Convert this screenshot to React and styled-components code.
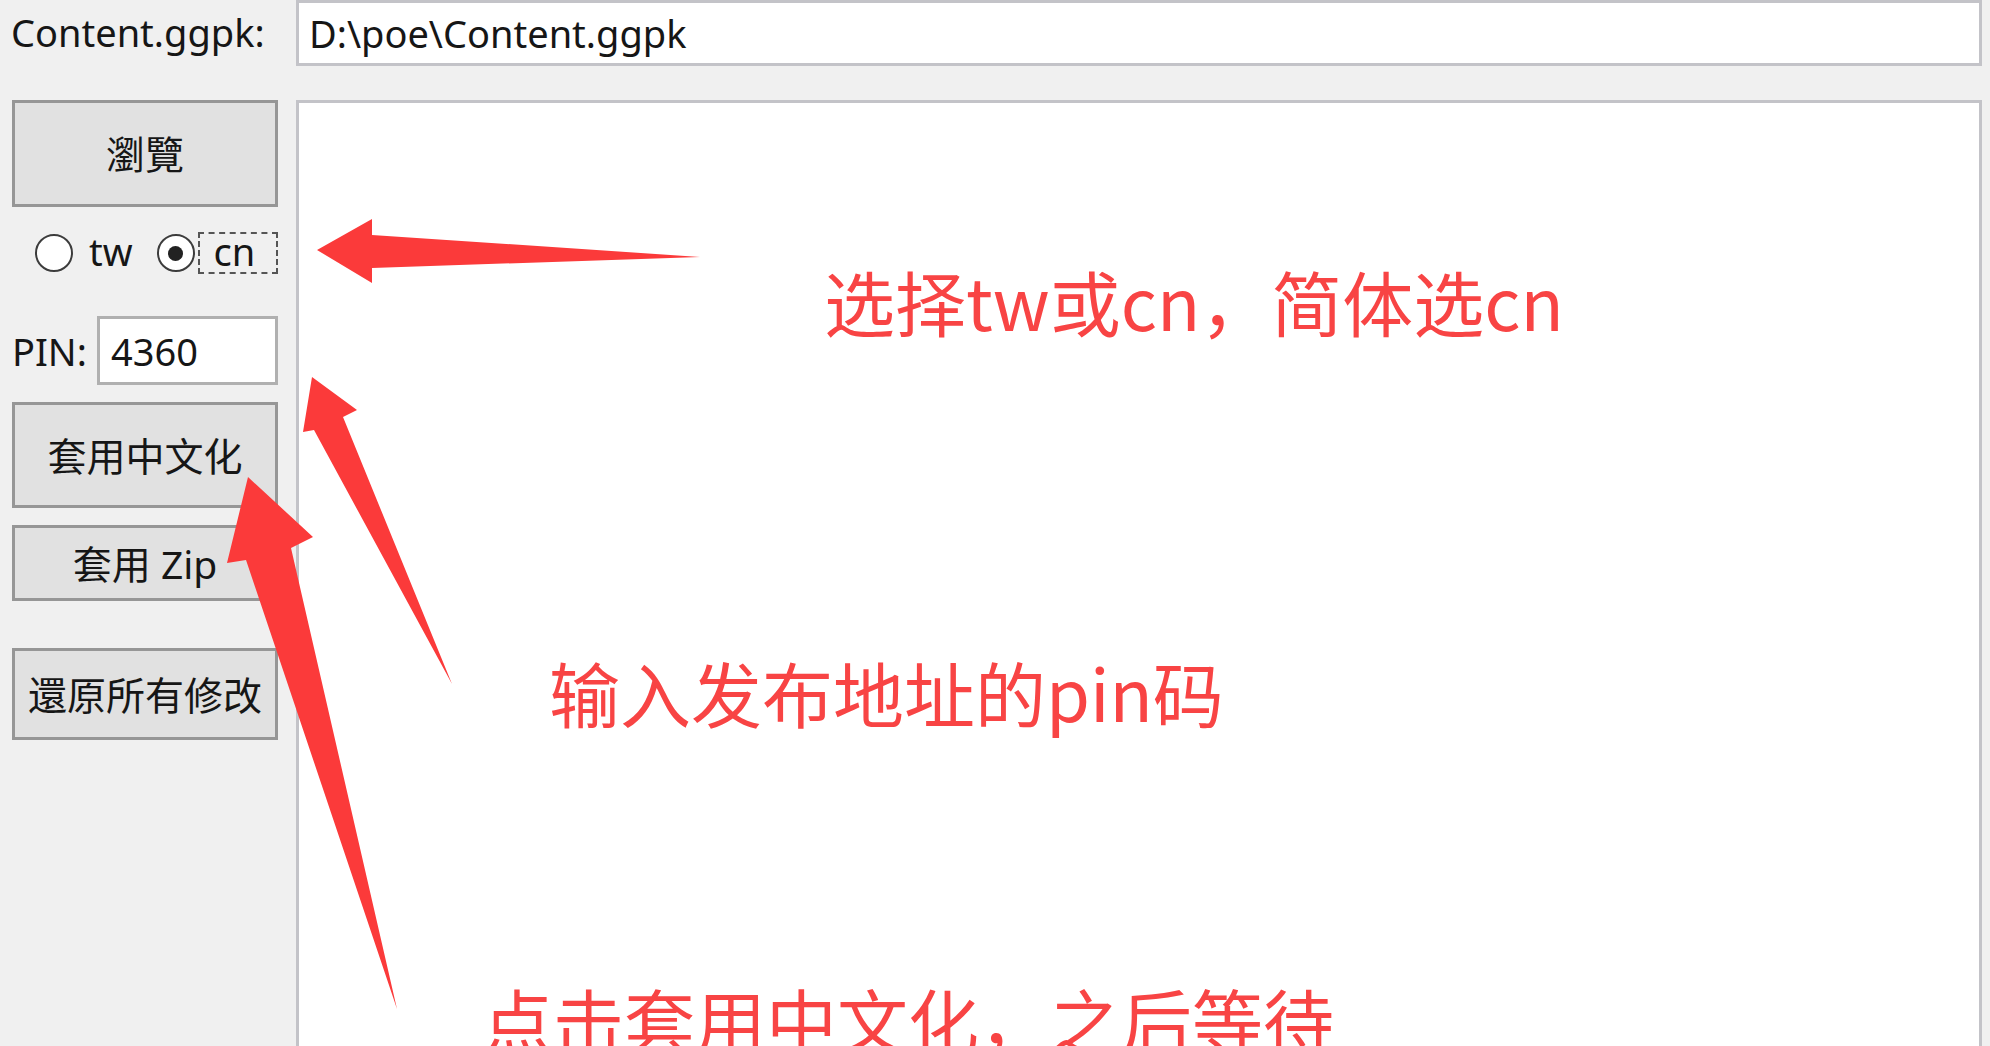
import React from 'react';
import styled, { createGlobalStyle } from 'styled-components';

const Global = createGlobalStyle`
  html, body { margin: 0; padding: 0; background: #f0f0f0; overflow: hidden; }
  body { font-family: "Noto Sans", "Noto Sans CJK SC", sans-serif; color: #161616; }
`;

const Window = styled.div`
  position: relative;
  width: 1990px;
  height: 1046px;
  overflow: hidden;
  box-sizing: border-box;
  background: #f0f0f0;
  padding: 0 8px 0 11px;
  display: grid;
  grid-template-columns: 267px 1fr;
  grid-template-rows: 66px 1fr;
  column-gap: 18px;
  row-gap: 34px;
  font-size: 38px;
`;

const Label = styled.div`
  display: flex;
  align-items: center;
  white-space: nowrap;
  line-height: 1;
  padding-bottom: 2px;
`;

const TextBox = styled.div`
  box-sizing: border-box;
  height: ${p => p.$h || 66}px;
  background: #fff;
  border: 3px solid #c3c3c8;
  display: flex;
  align-items: center;
  padding-left: ${p => p.$pl || 10}px;
  white-space: nowrap;
  line-height: 1;
`;

const Side = styled.div`
  display: flex;
  flex-direction: column;
  min-height: 0;
`;

const Button = styled.div`
  box-sizing: border-box;
  margin-top: ${p => p.$mt || 0}px;
  height: ${p => p.$h}px;
  width: 266px;
  margin-left: 1px;
  background: #e1e1e1;
  border: 3px solid #969696;
  display: flex;
  align-items: center;
  justify-content: center;
  font-family: "Noto Sans", "Noto Sans CJK SC", sans-serif;
  font-size: 39px;
  line-height: 1;
  white-space: nowrap;
`;

const RadioRow = styled.div`
  margin-top: 25px;
  height: 42px;
  display: flex;
  align-items: center;
  padding-left: 24px;
`;

const RadioDot = styled.span`
  box-sizing: border-box;
  width: 38px;
  height: 38px;
  border-radius: 50%;
  border: 2px solid #3c3c3c;
  background: #fff;
  display: flex;
  align-items: center;
  justify-content: center;
  flex: none;
  margin-right: ${p => p.$mr}px;
  &::after {
    content: "";
    width: 15px;
    height: 15px;
    border-radius: 50%;
    background: #222;
    display: ${p => (p.$on ? 'block' : 'none')};
  }
`;

const RadioText = styled.span`
  line-height: 1;
  margin-right: ${p => p.$mr || 0}px;
  padding-bottom: 4px;
`;

const Focus = styled.span`
  box-sizing: border-box;
  height: 42px;
  width: 81px;
  border: 2px dashed #555;
  display: flex;
  align-items: center;
  padding-left: 14px;
  line-height: 1;
  padding-bottom: 4px;
`;

const PinRow = styled.div`
  margin-top: 42px;
  display: flex;
  align-items: center;
  gap: 12px;
  padding-left: 1px;
`;

const PinLabel = styled.span`
  line-height: 1;
  width: 73px;
`;

const PinBox = styled(TextBox)`
  width: 181px;
  height: 69px;
  border-color: #b0b0b0;
  padding-left: 11px;
`;

const Link = styled.div`
  margin-top: auto;
  margin-bottom: -36px;
  text-align: center;
  color: #0066cc;
  text-decoration: underline;
  line-height: 1;
  padding-left: 6px;
`;

const LogArea = styled.div`
  box-sizing: border-box;
  height: 1000px;
  background: #fff;
  border: 3px solid #c3c3c8;
  padding: 6px 10px;
`;

const Overlay = styled.div`
  position: absolute;
  inset: 0;
  pointer-events: none;
`;

const ArrowLayer = styled.svg`
  position: absolute;
  left: 0;
  top: 0;
`;

const Note = styled.div`
  position: absolute;
  left: ${p => p.$x}px;
  top: ${p => p.$y}px;
  font-family: "Noto Sans CJK SC", sans-serif;
  font-size: 71px;
  line-height: 1;
  color: #f84444;
  white-space: nowrap;
`;

const arrows = [
  '317,250 372,219 372,235 700,257 372,268 372,283',
  '312,377 357,410 343,417 452,684 314,430 303,432',
  '248,477 313,537 291,548 397,1009 246,560 227,563',
];

export default function App() {
  return (
    <>
      <Global />
      <Window>
        <Label>Content.ggpk:</Label>
        <TextBox>D:\poe\Content.ggpk</TextBox>
        <Side>
          <Button $h={107}>瀏覽</Button>
          <RadioRow>
            <RadioDot $mr={16} />
            <RadioText $mr={24}>tw</RadioText>
            <RadioDot $on $mr={3} />
            <Focus>cn</Focus>
          </RadioRow>
          <PinRow>
            <PinLabel>PIN:</PinLabel>
            <PinBox>4360</PinBox>
          </PinRow>
          <Button $mt={17} $h={106}>套用中文化</Button>
          <Button $mt={17} $h={76}>套用 Zip</Button>
          <Button $mt={47} $h={92}>還原所有修改</Button>
          <Link>wallet</Link>
        </Side>
        <LogArea />
        <Overlay>
          <ArrowLayer width="1990" height="1046" viewBox="0 0 1990 1046">
            {arrows.map((pts, i) => (
              <polygon key={i} points={pts} fill="#fb3a3a" />
            ))}
          </ArrowLayer>
          <Note $x={824} $y={265}>选择tw或cn，简体选cn</Note>
          <Note $x={549} $y={656}>输入发布地址的pin码</Note>
          <Note $x={482} $y={983}>点击套用中文化，之后等待</Note>
        </Overlay>
      </Window>
    </>
  );
}
